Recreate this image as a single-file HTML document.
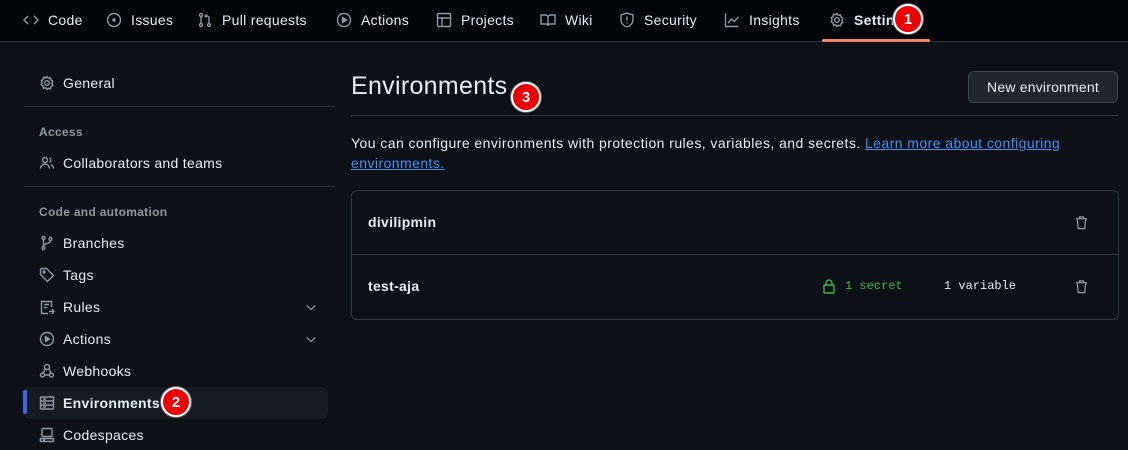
<!DOCTYPE html>
<html><head><meta charset="utf-8"><style>
*{box-sizing:border-box;margin:0;padding:0}
body{width:1128px;height:450px;overflow:hidden;background:#0d1117;font-family:"Liberation Sans",sans-serif;color:#e6edf3;position:relative;letter-spacing:0.3px}
.nav{position:absolute;left:0;top:0;width:1128px;height:42px;background:#010409;border-bottom:1px solid #30363d}
.ni{position:absolute;top:0;height:40px;display:flex;align-items:center;font-size:14px;color:#e6edf3}
.ni svg{margin-right:9px}
.ul{position:absolute;left:822px;top:39px;width:108px;height:3px;background:#f78166;border-radius:2px}
.badge{position:absolute;width:30px;height:30px;border-radius:50%;background:#e00;border:2px solid #fff;box-shadow:0 0 0 1px #666;color:#fff;font-weight:bold;font-size:15px;display:flex;align-items:center;justify-content:center;letter-spacing:0}
.si{position:absolute;left:39px;font-size:14px;color:#e6edf3;display:flex;align-items:center;height:20px}
.si svg{margin-right:8px}
.sh{position:absolute;left:39px;font-size:12px;font-weight:bold;color:#9198a1}
.hr{position:absolute;height:1px;background:#30363d}
svg{stroke:#9198a1;fill:none;stroke-width:1.4}
.mono{font-family:"Liberation Mono",monospace;font-size:12px;letter-spacing:0}
</style></head><body>
<div class="nav">
<div class="ni" style="left:23px"><svg width="16" height="16" viewBox="0 0 16 16"><path d="M5 4L1 8l4 4M11 4l4 4-4 4"/></svg>Code</div>
<div class="ni" style="left:106px"><svg width="16" height="16" viewBox="0 0 16 16"><circle cx="8" cy="8" r="6.5"/><circle cx="8" cy="8" r="1" fill="#9198a1"/></svg>Issues</div>
<div class="ni" style="left:197px"><svg width="16" height="16" viewBox="0 0 16 16"><circle cx="4" cy="3" r="1.5"/><circle cx="4" cy="13" r="1.5"/><circle cx="12" cy="13" r="1.5"/><path d="M4 4.5v7M12 11.5V6a2 2 0 0 0-2-2H8M9.5 2.5L8 4l1.5 1.5"/></svg>Pull requests</div>
<div class="ni" style="left:336px"><svg width="16" height="16" viewBox="0 0 16 16"><circle cx="8" cy="8" r="6.5"/><path d="M6.5 5.5v5l4-2.5z" fill="#9198a1"/></svg>Actions</div>
<div class="ni" style="left:436px"><svg width="16" height="16" viewBox="0 0 16 16"><rect x="1.5" y="1.5" width="13" height="13" rx="1"/><path d="M1.5 6h13M6 6v8.5"/></svg>Projects</div>
<div class="ni" style="left:540px"><svg width="16" height="16" viewBox="0 0 16 16"><path d="M1 3h4.5A2.5 2.5 0 0 1 8 5.5V14a2 2 0 0 0-2-2H1zM15 3h-4.5A2.5 2.5 0 0 0 8 5.5V14a2 2 0 0 1 2-2h5z"/></svg>Wiki</div>
<div class="ni" style="left:619px"><svg width="16" height="16" viewBox="0 0 16 16"><path d="M8 1l6 2v5c0 3.5-3 6-6 7-3-1-6-3.5-6-7V3z"/><path d="M8 4.5v4M8 10.5v1"/></svg>Security</div>
<div class="ni" style="left:724px"><svg width="16" height="16" viewBox="0 0 16 16"><path d="M1.5 1.5v13h13M4 11l3.5-4 3 2.5 4-5"/></svg>Insights</div>
<div class="ni" style="left:829px;font-weight:bold"><svg width="16" height="16" viewBox="0 0 16 16"><circle cx="8" cy="8" r="2.3"/><path d="M8 1.5l1.3 1.8 2.2-.5.5 2.2 1.8 1.3-1 2 1 2-1.8 1.3-.5 2.2-2.2-.5L8 14.5l-1.3-1.8-2.2.5-.5-2.2L2.2 9.7l1-2-1-2 1.8-1.3.5-2.2 2.2.5z"/></svg>Settin</div>
<div class="ul"></div>
</div>
<div class="badge" style="left:893px;top:4px">1</div>

<div class="si" style="top:73px"><svg width="16" height="16" viewBox="0 0 16 16"><circle cx="8" cy="8" r="2.3"/><path d="M8 1.5l1.3 1.8 2.2-.5.5 2.2 1.8 1.3-1 2 1 2-1.8 1.3-.5 2.2-2.2-.5L8 14.5l-1.3-1.8-2.2.5-.5-2.2L2.2 9.7l1-2-1-2 1.8-1.3.5-2.2 2.2.5z"/></svg>General</div>
<div class="hr" style="left:24px;top:106px;width:311px"></div>
<div class="sh" style="top:125px">Access</div>
<div class="si" style="top:153px"><svg width="16" height="16" viewBox="0 0 16 16"><circle cx="6" cy="5" r="2.5"/><path d="M1.5 13.5a4.5 4.5 0 0 1 9 0M10.5 2.8a2.5 2.5 0 0 1 0 4.4M12 9.5a4.5 4.5 0 0 1 2.5 4"/></svg>Collaborators and teams</div>
<div class="hr" style="left:24px;top:186px;width:311px"></div>
<div class="sh" style="top:205px">Code and automation</div>
<div class="si" style="top:233px"><svg width="16" height="16" viewBox="0 0 16 16"><circle cx="4.5" cy="3" r="1.5"/><circle cx="4.5" cy="13" r="1.5"/><circle cx="11.5" cy="4" r="1.5"/><path d="M4.5 4.5v7M11.5 5.5c0 4-7 2-7 6"/></svg>Branches</div>
<div class="si" style="top:265px"><svg width="16" height="16" viewBox="0 0 16 16"><path d="M1.5 2.5v5l7 7 6-6-7-7h-5z"/><circle cx="5" cy="5" r="1"/></svg>Tags</div>
<div class="si" style="top:297px"><svg width="16" height="16" viewBox="0 0 16 16"><path d="M9 14.5H2.5v-12h10V8M5 5.5h5M5 8.5h3M10 12.5h5M13 10l2 2.5-2 2.5"/></svg>Rules</div>
<div class="si" style="top:329px"><svg width="16" height="16" viewBox="0 0 16 16"><circle cx="8" cy="8" r="6.5"/><path d="M6.5 5.5v5l4-2.5z" fill="#9198a1"/></svg>Actions</div>
<svg style="position:absolute;left:304px;top:300px" width="14" height="14" viewBox="0 0 16 16"><path d="M3 6l5 5 5-5"/></svg>
<svg style="position:absolute;left:304px;top:332px" width="14" height="14" viewBox="0 0 16 16"><path d="M3 6l5 5 5-5"/></svg>
<div class="si" style="top:361px"><svg width="16" height="16" viewBox="0 0 16 16"><circle cx="8" cy="4" r="2.5"/><circle cx="3.5" cy="12" r="2"/><circle cx="12.5" cy="12" r="2"/><path d="M6.5 6L4 10M10 5.5l2 4.5M5.5 12h5"/></svg>Webhooks</div>
<div style="position:absolute;left:24px;top:387px;width:304px;height:32px;background:#161b22;border-radius:6px"></div>
<div style="position:absolute;left:23px;top:390px;width:4px;height:24px;background:#4263eb;border-radius:2px"></div>
<div class="si" style="top:393px;font-weight:bold"><svg width="16" height="16" viewBox="0 0 16 16"><rect x="1.5" y="2" width="13" height="12" rx="1"/><path d="M1.5 6h13M1.5 10h13M4 4h3M4 8h3M4 12h3"/></svg>Environments</div>
<div class="badge" style="left:161px;top:387px">2</div>
<div class="si" style="top:425px"><svg width="16" height="16" viewBox="0 0 16 16"><rect x="3" y="1.5" width="10" height="8" rx="1"/><path d="M1.5 11.5h13v3h-13zM4 13h2"/></svg>Codespaces</div>

<div style="position:absolute;left:351px;top:72px;font-size:25px;color:#e6edf3">Environments</div>
<div class="badge" style="left:511px;top:82px">3</div>
<div style="position:absolute;left:968px;top:71px;width:150px;height:32px;background:#21262d;border:1px solid #3d444d;border-radius:6px;font-size:14px;display:flex;align-items:center;justify-content:center;letter-spacing:0.2px">New environment</div>
<div class="hr" style="left:351px;top:115px;width:767px"></div>
<div style="position:absolute;left:351px;top:133px;width:740px;font-size:14px;line-height:20px;letter-spacing:0.44px">You can configure environments with protection rules, variables, and secrets. <span style="color:#4493f8;text-decoration:underline">Learn more about configuring environments.</span></div>
<div style="position:absolute;left:351px;top:190px;width:768px;height:130px;border:1px solid #30363d;border-radius:6px"></div>
<div class="hr" style="left:352px;top:254px;width:766px"></div>
<div style="position:absolute;left:368px;top:214px;font-size:14px;font-weight:bold">divilipmin</div>
<div style="position:absolute;left:368px;top:278px;font-size:14px;font-weight:bold">test-aja</div>
<svg style="position:absolute;left:821px;top:278px;stroke:#3fb950" width="16" height="16" viewBox="0 0 16 16"><rect x="3" y="7" width="10" height="8" rx="1"/><path d="M5 7V5a3 3 0 0 1 6 0v2"/></svg>
<div class="mono" style="position:absolute;left:845px;top:279px;color:#3fb950">1 secret</div>
<div class="mono" style="position:absolute;left:944px;top:279px;color:#e6edf3">1 variable</div>
<svg style="position:absolute;left:1074px;top:215px" width="15" height="15" viewBox="0 0 16 16"><path d="M2 4h12M6 4V2h4v2M3.5 4l1 10.5h7l1-10.5"/></svg>
<svg style="position:absolute;left:1074px;top:279px" width="15" height="15" viewBox="0 0 16 16"><path d="M2 4h12M6 4V2h4v2M3.5 4l1 10.5h7l1-10.5"/></svg>
</body></html>
